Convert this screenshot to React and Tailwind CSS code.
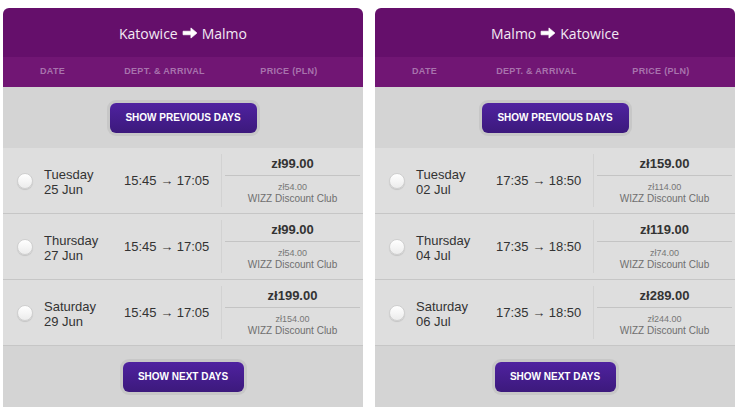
import React from "react";

const Arrow = () => (
  <svg width="16" height="12" viewBox="0 0 17 13" className="inline-block mx-[4px] -mt-[1px]">
    <path d="M1 4.6 H9.5 V1 L16 6.5 L9.5 12 V8.4 H1 Z" fill="#ffffff" stroke="#ffffff" strokeWidth="0.8" strokeLinejoin="round" />
  </svg>
);

const Radio = () => (
  <div className="w-[16px] h-[16px] rounded-full border border-[#cfcfcf] bg-gradient-to-b from-[#ffffff] to-[#ececec] shadow-[0_1px_1px_rgba(0,0,0,0.12)] shrink-0" />
);

const ShowButton = ({ label, w }) => (
  <button
    className={`${w} h-[30px] rounded-[6px] bg-gradient-to-b from-[#4f22a0] to-[#3c197c] shadow-[0_0_0_3px_#c7c7c7] text-white text-[10px] font-bold font-['Liberation_Sans',Arial,sans-serif] tracking-[0px]`}
  >
    {label}
  </button>
);

const Row = ({ day, date, time, price, club }) => (
  <div className="flex items-stretch h-[66px] bg-[#dedede] border-b border-[#c6c6c6]">
    <div className="flex items-center pl-[14px]">
      <Radio />
    </div>
    <div className="flex flex-col justify-center pt-[2px] ml-[11px] w-[80px] text-[13px] leading-[15px] text-[#333333]">
      <span>{day}</span>
      <span>{date}</span>
    </div>
    <div className="flex items-center w-[97px] text-[13px] text-[#333333]">
      {time}
    </div>
    <div className="flex-1 my-[6px] border-l border-[#d2d2d2] flex flex-col items-stretch">
      <div className="pt-[2px] h-[21px] text-center font-bold text-[13px] leading-[16px] text-[#333333]">{price}</div>
      <div className="mx-[3px] border-t border-[#c4c4c4]" />
      <div className="mt-[5px] text-center text-[9px] leading-[12px] text-[#777777]">{club}</div>
      <div className="text-center text-[10px] leading-[12px] text-[#6f6f6f]">WIZZ Discount Club</div>
    </div>
  </div>
);

const Card = ({ from, to, rows }) => (
  <div className="w-[360px] rounded-[6px] overflow-hidden font-['Liberation_Sans',Arial,sans-serif]">
    <div className="h-[49px] bg-[#650f6b] flex items-center justify-center text-[#f3eaf4] text-[14px] font-['Open_Sans',sans-serif] pt-[2px]">
      <span>{from}</span>
      <Arrow />
      <span>{to}</span>
    </div>
    <div className="h-[30px] bg-[#711674] flex items-center text-[#a873ad] text-[9px] font-bold font-['Liberation_Sans',Arial,sans-serif] tracking-[0.3px]">
      <div className="w-[99px] text-center">DATE</div>
      <div className="w-[125px] text-center">DEPT. &amp; ARRIVAL</div>
      <div className="w-[124px] text-center">PRICE (PLN)</div>
    </div>
    <div className="h-[61px] bg-[#d4d4d4] flex items-center justify-center">
      <ShowButton label="SHOW PREVIOUS DAYS" w="w-[147px]" />
    </div>
    {rows.map((r, i) => (
      <Row key={i} {...r} />
    ))}
    <div className="h-[61px] bg-[#d4d4d4] flex items-center justify-center">
      <ShowButton label="SHOW NEXT DAYS" w="w-[121px]" />
    </div>
  </div>
);

export default function App() {
  const left = [
    { day: "Tuesday", date: "25 Jun", time: "15:45 → 17:05", price: "zł99.00", club: "zł54.00" },
    { day: "Thursday", date: "27 Jun", time: "15:45 → 17:05", price: "zł99.00", club: "zł54.00" },
    { day: "Saturday", date: "29 Jun", time: "15:45 → 17:05", price: "zł199.00", club: "zł154.00" },
  ];
  const right = [
    { day: "Tuesday", date: "02 Jul", time: "17:35 → 18:50", price: "zł159.00", club: "zł114.00" },
    { day: "Thursday", date: "04 Jul", time: "17:35 → 18:50", price: "zł119.00", club: "zł74.00" },
    { day: "Saturday", date: "06 Jul", time: "17:35 → 18:50", price: "zł289.00", club: "zł244.00" },
  ];
  return (
    <div className="w-[739px] h-[413px] bg-white flex gap-[12px] pl-[3px] pt-[8px]">
      <Card from="Katowice" to="Malmo" rows={left} />
      <Card from="Malmo" to="Katowice" rows={right} />
    </div>
  );
}
